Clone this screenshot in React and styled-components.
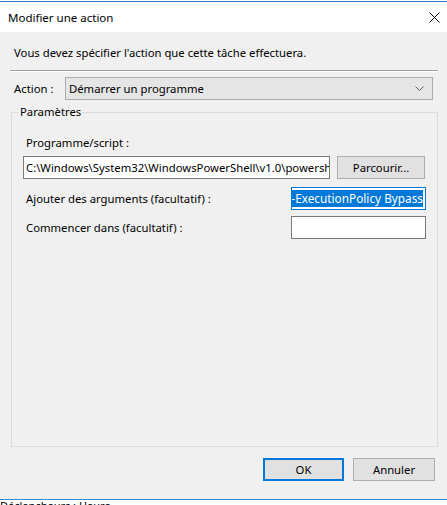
import React from 'react';
import styled, { createGlobalStyle } from 'styled-components';

const GlobalStyle = createGlobalStyle`
  html, body {
    margin: 0;
    padding: 0;
    background: #ffffff;
  }
  body {
    font-family: "Noto Sans", "Open Sans", sans-serif;
    font-size: 11.3px;
    color: #000;
  }
`;

const Window = styled.div`
  width: 447px;
  height: 505px;
  display: flex;
  flex-direction: column;
  overflow: hidden;
  padding-top: 1px;
  box-sizing: border-box;
`;

const TitleBar = styled.div`
  flex-shrink: 0;
  border-top: 1px solid #2f7bc2;
  background: #ffffff;
  display: flex;
  align-items: center;
  justify-content: space-between;
  padding: 1px 6px 0 8px;
  box-sizing: border-box;
  height: 31px;
`;

const Title = styled.span`
  font-size: 11.5px;
  line-height: 16px;
`;

const CloseButton = styled.div`
  width: 14px;
  height: 14px;
  display: flex;
  align-items: center;
  justify-content: center;
`;

const Body = styled.div`
  flex: 1;
  background: #f0f0f0;
  padding: 13px 9px 0 10px;
  display: flex;
  flex-direction: column;
  border-bottom: 1px solid #3a8bd0;
`;

const Intro = styled.div`
  line-height: 16px;
  padding-left: 4px;
`;

const Separator = styled.div`
  margin-top: 9px;
  height: 1px;
  background: #a0a0a0;
  border-bottom: 1px solid #ffffff;
`;

const ActionRow = styled.div`
  margin-top: 5px;
  display: flex;
  align-items: center;
  padding-left: 4px;
  padding-right: 5px;
`;

const Label = styled.span`
  line-height: 16px;
  width: ${(p) => p.$width || 'auto'};
  flex-shrink: 0;
  white-space: nowrap;
`;

const Combo = styled.div`
  flex: 1;
  height: 23px;
  box-sizing: border-box;
  background: #e5e5e5;
  border: 1px solid #acacac;
  display: flex;
  align-items: center;
  justify-content: space-between;
  padding: 0 8px 0 3px;
`;

const Group = styled.fieldset`
  margin: 4px 0 0 1px;
  padding: 15px 11px 0 11px;
  border: 1px solid #dcdcdc;
  height: 343px;
  box-sizing: border-box;
  display: flex;
  flex-direction: column;
`;

const Legend = styled.legend`
  padding: 0 1px;
  margin-left: -4px;
  line-height: 16px;
`;

const FieldLabel = styled.div`
  line-height: 16px;
  padding-left: 3px;
`;

const Row = styled.div`
  display: flex;
  align-items: center;
  justify-content: space-between;
  margin-top: ${(p) => p.$gap || 0}px;
`;

const TextBox = styled.div`
  width: ${(p) => p.$width}px;
  height: 23px;
  box-sizing: border-box;
  background: #ffffff;
  border: 1px solid ${(p) => (p.$focused ? '#0078d7' : '#7a7a7a')};
  display: flex;
  align-items: center;
  justify-content: ${(p) => (p.$alignEnd ? 'flex-end' : 'flex-start')};
  padding: 0 2px;
  overflow: hidden;
  white-space: nowrap;
  line-height: 16px;
`;

const Selected = styled.span`
  background: #0078d7;
  color: #ffffff;
  line-height: 17px;
  font-size: 11.8px;
`;

const Button = styled.div`
  width: ${(p) => p.$width}px;
  height: 23px;
  box-sizing: border-box;
  background: #e1e1e1;
  border: ${(p) => (p.$default ? '2px solid #0078d7' : '1px solid #adadad')};
  display: flex;
  align-items: center;
  justify-content: center;
  line-height: 16px;
  flex-shrink: 0;
`;

const Footer = styled.div`
  margin-top: 11px;
  display: flex;
  justify-content: flex-end;
  gap: 9px;
  padding-right: 3px;
`;

const Behind = styled.div`
  height: 4px;
  margin-top: 1px;
  background: #ffffff;
  overflow: hidden;
  font-size: 11px;
  line-height: 10px;
  white-space: nowrap;
`;

const Chevron = () => (
  <svg width="9" height="5" viewBox="0 0 9 5">
    <path d="M0.5 0.5 L4.5 4.5 L8.5 0.5" fill="none" stroke="#606060" strokeWidth="1" />
  </svg>
);

const CloseIcon = () => (
  <svg width="11" height="11" viewBox="0 0 11 11">
    <path d="M0.5 0.5 L10.5 10.5 M10.5 0.5 L0.5 10.5" stroke="#000" strokeWidth="1" />
  </svg>
);

export default function App() {
  return (
    <>
      <GlobalStyle />
      <Window>
        <TitleBar>
          <Title>Modifier une action</Title>
          <CloseButton>
            <CloseIcon />
          </CloseButton>
        </TitleBar>
        <Body>
          <Intro>Vous devez spécifier l'action que cette tâche effectuera.</Intro>
          <Separator />
          <ActionRow>
            <Label $width="51px">Action :</Label>
            <Combo>
              <span>Démarrer un programme</span>
              <Chevron />
            </Combo>
          </ActionRow>
          <Group>
            <Legend>Paramètres</Legend>
            <FieldLabel>Programme/script :</FieldLabel>
            <Row $gap={5}>
              <TextBox $width={307}>C:\Windows\System32\WindowsPowerShell\v1.0\powershell.exe</TextBox>
              <Button $width={88} style={{ marginRight: 1 }}>Parcourir...</Button>
            </Row>
            <Row $gap={8}>
              <FieldLabel>Ajouter des arguments (facultatif) :</FieldLabel>
              <TextBox $width={135} $focused $alignEnd>
                <Selected>-ExecutionPolicy Bypass</Selected>
              </TextBox>
            </Row>
            <Row $gap={6}>
              <FieldLabel>Commencer dans (facultatif) :</FieldLabel>
              <TextBox $width={135} />
            </Row>
          </Group>
          <Footer>
            <Button $width={81} $default>OK</Button>
            <Button $width={82}>Annuler</Button>
          </Footer>
        </Body>
        <Behind>Déclencheurs : Heure</Behind>
      </Window>
    </>
  );
}
